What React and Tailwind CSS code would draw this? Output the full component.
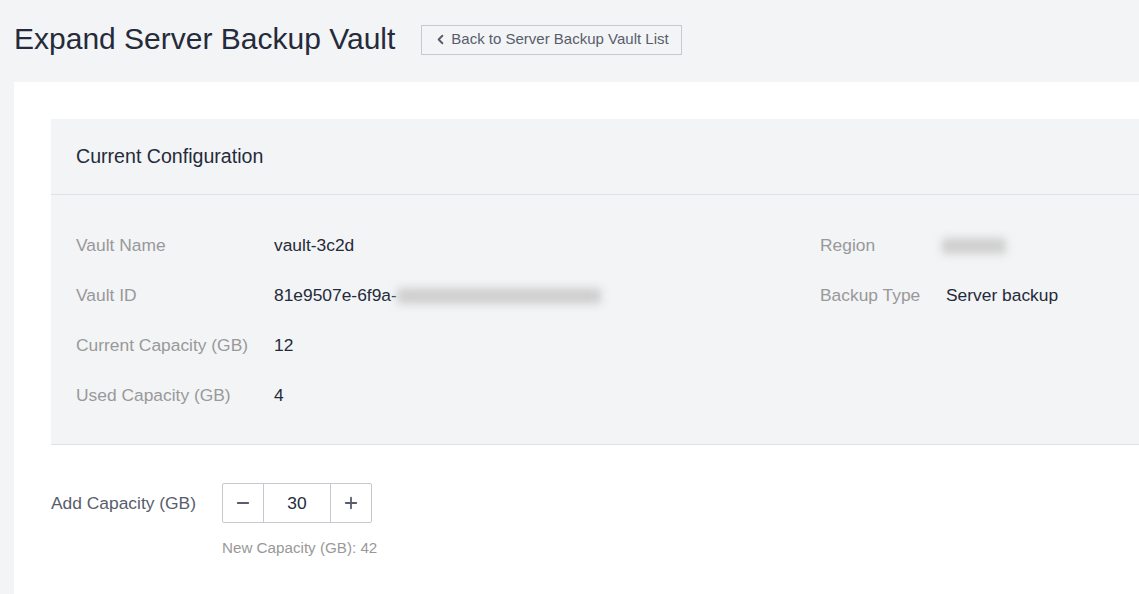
import { ChevronLeft, Minus, Plus } from 'lucide-react';

const Row = ({ label, children, labelWidth = 'w-[198px]' }) => (
  <div className="flex items-center h-[50px]">
    <span className={`${labelWidth} shrink-0 text-[#999]`}>{label}</span>
    <span className="text-[#252b3a]">{children}</span>
  </div>
);

const Blur = ({ w }) => (
  <span className={`inline-block align-middle h-[16px] ${w} bg-[#cfcfcf] rounded-[3px] blur-[4px]`} />
);

export default function App() {
  return (
    <div className="min-h-[594px] bg-[#f3f4f6] overflow-hidden font-['Liberation_Sans',Arial,sans-serif] text-[17.4px]">
      <div className="flex items-center h-[82px] pl-[14px] pb-[5px]">
        <h1 className="text-[30px] text-[#252b3a] leading-none">Expand Server Backup Vault</h1>
        <button className="ml-[26px] mt-[2px] flex items-center gap-[3px] h-[30px] pl-[11px] pr-[12px] border border-[#c6c9cf] bg-[#f3f4f6] text-[15px] text-[#575d6c]">
          <ChevronLeft size={15} strokeWidth={3} />
          Back to Server Backup Vault List
        </button>
      </div>
      <div className="ml-[14px] bg-white pt-[37px] pl-[37px] min-h-[512px]">
        <div className="bg-[#f3f4f6] border-b border-[#dfe1e6]">
          <div className="h-[76px] flex items-center pl-[25px] text-[19.6px] text-[#252b3a] border-b border-[#dfe1e6]">
            Current Configuration
          </div>
          <div className="flex pl-[25px] pt-[25px] pb-[24px]">
            <div className="w-[744px]">
              <Row label="Vault Name">vault-3c2d</Row>
              <Row label="Vault ID">81e9507e-6f9a-<Blur w="w-[204px]" /></Row>
              <Row label="Current Capacity (GB)">12</Row>
              <Row label="Used Capacity (GB)">4</Row>
            </div>
            <div>
              <Row label="Region" labelWidth="w-[126px]"><span className="-ml-[4px]"><Blur w="w-[64px]" /></span></Row>
              <Row label="Backup Type" labelWidth="w-[126px]">Server backup</Row>
            </div>
          </div>
        </div>
        <div className="flex items-center mt-[38px]">
          <span className="w-[171px] text-[#575d6c]">Add Capacity (GB)</span>
          <div className="flex h-[40px] border border-[#c6c9cf] rounded-[2px]">
            <button className="w-[41px] flex items-center justify-center text-[#575d6c] border-r border-[#c6c9cf]">
              <Minus size={18} strokeWidth={2.4} />
            </button>
            <div className="w-[66px] flex items-center justify-center text-[#252b3a]">30</div>
            <button className="w-[41px] flex items-center justify-center text-[#575d6c] border-l border-[#c6c9cf]">
              <Plus size={18} strokeWidth={2.4} />
            </button>
          </div>
        </div>
        <div className="ml-[171px] mt-[14px] text-[15.2px] text-[#999]">New Capacity (GB): 42</div>
      </div>
    </div>
  );
}
